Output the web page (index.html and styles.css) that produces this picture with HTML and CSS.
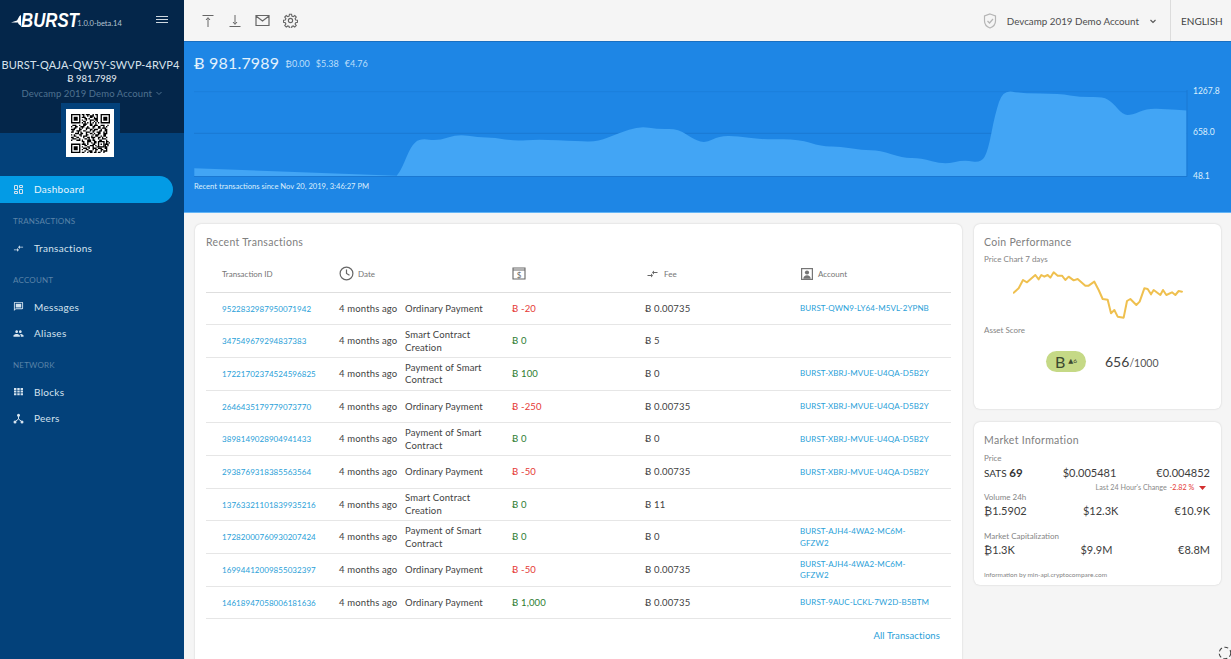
FILE: index.html
```html
<!DOCTYPE html>
<html>
<head>
    <title>Burst Wallet</title>
    <link rel="stylesheet" href="styles.css">
</head>
<body>
    <aside class="sidebar">
        <div class="side-head">
            <div class="logo-row">
                <svg class="wing" width="10" height="14" viewBox="0 0 10 14"><path d="M0 8.5 6 6.5 8.5 2 10 1V12L7.5 10 7 8.5Z" fill="#fff"/></svg>
                <span class="logo">BURST</span>
                <span class="version">1.0.0-beta.14</span>
                <div class="burger"><i></i><i></i><i></i></div>
            </div>
            <div class="address">BURST-QAJA-QW5Y-SWVP-4RVP4</div>
            <div class="side-balance">Ƀ 981.7989</div>
            <div class="side-account">Devcamp 2019 Demo Account
                <svg width="8" height="8" viewBox="0 0 8 8"><path d="M1.5 3 4 5.5 6.5 3" fill="none" stroke="#4f7290"/></svg>
            </div>
            <div class="qr-box">
                <div class="qr-white">
                    <svg width="39" height="39" viewBox="0 0 29 29">
                        <path fill-rule="evenodd" d="M0 0h7v7H0zM1 1v5h5V1zM2 2h3v3H2zM22 0h7v7h-7zM23 1v5h5V1zM24 2h3v3h-3zM0 22h7v7H0zM1 23v5h5v-5zM2 24h3v3H2zM20 20h5v5h-5zM21 21v3h3v-3zM22 22h1v1h-1z"/>
                        <path fill="none" stroke="#000" d="M8 .5h2m1 0h3m2 0h1m1 0h2M9 1.5h1m2 0h1m1 0h3m2 0h1M8 2.5h3m3 0h2m1 0h1m1 0h1M10 3.5h2m1 0h1m3 0h3M8 4.5h1m2 0h1m2 0h3m1 0h2M9 5.5h2m3 0h1m2 0h1m1 0h1M8 6.5h1m1 0h1m1 0h1m1 0h1m1 0h1m1 0h1m1 0h1M9 7.5h3m2 0h2m2 0h1M1 8.5h3m2 0h1m2 0h2m3 0h2m1 0h3m2 0h3m2 0h1M0 9.5h1m2 0h2m2 0h3m2 0h1m3 0h2m2 0h2m2 0h1m1 0h1M2 10.5h2m2 0h1m1 0h1m2 0h3m2 0h1m3 0h2m1 0h3M0 11.5h3m3 0h2m3 0h1m2 0h2m1 0h3m2 0h1m2 0h2M1 12.5h1m2 0h3m2 0h2m3 0h1m1 0h2m3 0h2m2 0h2M0 13.5h2m3 0h1m1 0h1m3 0h3m2 0h1m2 0h3m2 0h1m1 0h1M3 14.5h3m1 0h2m2 0h1m2 0h2m1 0h1m2 0h2m2 0h3M0 15.5h1m1 0h1m3 0h2m3 0h2m3 0h1m1 0h3m3 0h2M2 16.5h2m3 0h1m1 0h3m3 0h1m2 0h2m2 0h1m1 0h2M0 17.5h2m2 0h2m3 0h1m2 0h2m1 0h3m2 0h2m1 0h1m2 0h1M1 18.5h3m2 0h1m3 0h2m1 0h1m2 0h1m3 0h1m2 0h3M0 19.5h1m3 0h3m1 0h1m3 0h3m1 0h2m3 0h2m3 0h1M8 20.5h2m2 0h3m2 0h2m7 0h2M9 21.5h1m2 0h1m2 0h1m1 0h2m7 0h1m1 0h1M8 22.5h3m1 0h1m3 0h2m7 0h3M10 23.5h2m2 0h3m1 0h1m6 0h1m1 0h1M8 24.5h1m3 0h2m2 0h1m2 0h1m5 0h2M9 25.5h3m1 0h1m2 0h3m1 0h3m2 0h2M8 26.5h1m2 0h2m3 0h1m1 0h2m2 0h2m2 0h1M10 27.5h1m2 0h3m2 0h1m3 0h1m1 0h3M8 28.5h2m2 0h1m1 0h2m1 0h2m1 0h2m2 0h1"/>
                    </svg>
                </div>
            </div>
        </div>
        <nav class="nav">
            <a class="nav-item active">
                <svg width="11" height="11" viewBox="0 0 11 11" fill="none" stroke="currentColor"><path d="M1.5 1.5h3v4h-3zM6.5 1.5h3v2h-3zM1.5 7.5h3v2h-3zM6.5 5.5h3v4h-3z"/></svg>
                Dashboard</a>
            <div class="nav-label">TRANSACTIONS</div>
            <a class="nav-item">
                <svg width="11" height="11" viewBox="0 0 24 24" fill="currentColor"><path d="M9.01 14H2v2h7.01v3L13 15l-3.99-4v3zm5.98-1v-3H22V8h-7.01V5L11 9l3.99 4z"/></svg>
                Transactions</a>
            <div class="nav-label">ACCOUNT</div>
            <a class="nav-item">
                <svg width="11" height="11" viewBox="0 0 24 24" fill="currentColor"><path d="M20 2H4c-1.1 0-2 .9-2 2v18l4-4h14c1.1 0 2-.9 2-2V4c0-1.1-.9-2-2-2zm0 14H6l-2 2V4h16v12zM6 6h12v8H6z"/></svg>
                Messages</a>
            <a class="nav-item">
                <svg width="11" height="11" viewBox="0 0 24 24" fill="currentColor"><path d="M16 11c1.66 0 2.99-1.34 2.99-3S17.66 5 16 5c-1.66 0-3 1.34-3 3s1.34 3 3 3zm-8 0c1.66 0 2.99-1.34 2.99-3S9.66 5 8 5C6.34 5 5 6.34 5 8s1.34 3 3 3zm0 2c-2.33 0-7 1.17-7 3.5V19h14v-2.5c0-2.33-4.67-3.5-7-3.5zm8 0c-.29 0-.62.02-.97.05 1.16.84 1.97 1.97 1.97 3.45V19h6v-2.5c0-2.33-4.67-3.5-7-3.5z"/></svg>
                Aliases</a>
            <div class="nav-label">NETWORK</div>
            <a class="nav-item">
                <svg width="11" height="11" viewBox="0 0 11 11" fill="currentColor"><path d="M1 2h2.4v2H1zM4.3 2h2.4v2H4.3zM7.6 2H10v2H7.6zM1 4.6h2.4v2H1zM4.3 4.6h2.4v2H4.3zM7.6 4.6H10v2H7.6zM1 7.2h2.4v2H1zM4.3 7.2h2.4v2H4.3zM7.6 7.2H10v2H7.6z"/></svg>
                Blocks</a>
            <a class="nav-item">
                <svg width="11" height="11" viewBox="0 0 11 11" fill="currentColor"><path d="M5.5 3v3L2.2 8.6M5.5 6l3.3 2.6" stroke="currentColor" fill="none"/><circle cx="5.5" cy="2.2" r="1.5"/><circle cx="2" cy="9" r="1.5"/><circle cx="9" cy="9" r="1.5"/></svg>
                Peers</a>
        </nav>
    </aside>

    <div class="main">
        <header class="toolbar">
            <div class="tool-icons">
                <svg width="14" height="14" viewBox="0 0 14 14" fill="none" stroke="#666"><path d="M1.5 1.5h11M7 13V4M5 6l2-2.4L9 6"/></svg>
                <svg width="14" height="14" viewBox="0 0 14 14" fill="none" stroke="#666"><path d="M1.5 12.5h11M7 1v9M5 8l2 2.4L9 8"/></svg>
                <svg width="15" height="13" viewBox="0 0 15 13" fill="none" stroke="#666" stroke-width="1.2"><path d="M1 1.5h13v10H1zM1 2l6.5 5L14 2"/></svg>
                <svg width="15" height="15" viewBox="0 0 24 24" fill="none" stroke="#666" stroke-width="1.8"><circle cx="12" cy="12" r="3.4"/><path d="M10.3 2h3.4l.5 3 2.1.9 2.5-1.8 2.4 2.4-1.8 2.5.9 2.1 3 .5v3.4l-3 .5-.9 2.1 1.8 2.5-2.4 2.4-2.5-1.8-2.1.9-.5 3h-3.4l-.5-3-2.1-.9-2.5 1.8-2.4-2.4 1.8-2.5-.9-2.1-3-.5v-3.4l3-.5.9-2.1-1.8-2.5 2.4-2.4 2.5 1.8 2.1-.9z"/></svg>
            </div>
            <div class="tool-account">
                <svg width="14" height="16" viewBox="0 0 14 16" fill="none" stroke="#b5b5b5" stroke-width="1.2"><path d="M7 1l5.5 2v5c0 3.4-2.3 5.8-5.5 7-3.2-1.2-5.5-3.6-5.5-7V3z"/><path d="M4.5 8l2 2 3.5-4"/></svg>
                <span>Devcamp 2019 Demo Account</span>
                <svg width="8" height="8" viewBox="0 0 8 8"><path d="M1.5 3 4 5.5 6.5 3" fill="none" stroke="#555" stroke-width="1.1"/></svg>
            </div>
            <div class="lang">ENGLISH</div>
        </header>

        <section class="hero">
            <div class="hero-balance">
                <span class="big">Ƀ 981.7989</span>
                <span class="small">₿0.00</span>
                <span class="small">$5.38</span>
                <span class="small">€4.76</span>
            </div>
            <svg class="hero-chart" width="1037" height="97" viewBox="194 84 1037 97">
                <path d="M194 91.7H1187" stroke="#1c7fdc"/>
                <path d="M194 133.3H1187" stroke="#1a78d2"/>
                <path fill="#42a5f5" d="M194.3 168.3L396.7 175.7L399.4 171.9Q402 168 406.5 157Q411 146 415.5 142.2Q420 138.3 429 139.7Q438 141 448 137.5Q458 134 468 135.7Q478 137.3 486.5 137.5Q495 137.7 505 139.4Q515 141 526.5 140.2Q538 139.3 558 140.3Q578 141.3 588 141.5Q598 141.7 608 137.5Q618 133.3 629 129.7Q640 126 649 127.7Q658 129.3 668 129Q678 128.7 686.5 134.4Q695 140 700.5 141.5Q706 143 712.5 139.5Q719 136 728 136Q737 135.9 749 137.8Q761 139.6 779.5 139.3Q798 138.9 810 142.8Q822 146.7 830.5 146.6Q839 146.4 850.5 148.3Q862 150.1 871 150.3Q880 150.4 891.5 154.3Q903 158.2 911.5 158Q920 157.9 932 161.3Q944 164.7 954 162.3Q964 159.9 972.5 161.5Q981 163 984.5 157Q988 151 991.5 132.5Q995 114 999 102Q1003 90 1012.5 91.8Q1022 93.5 1040.5 93.5Q1059 93.5 1070 95.4Q1081 97.3 1092 97.1Q1103 96.9 1107.5 99.5Q1112 102 1117.5 108.5Q1123 115 1127.5 115Q1132 115 1139.5 111.7Q1147 108.4 1156.5 108.7Q1166 109 1176 109.8L1186.6 110.5V176.5H194.3Z"/>
                <path d="M194 176.5H1187M1187 90V176.5" stroke="#1a78d2"/>
                <text x="1193" y="94">1267.8</text>
                <text x="1193" y="135">658.0</text>
                <text x="1193" y="178.5">48.1</text>
            </svg>
            <div class="hero-note">Recent transactions since Nov 20, 2019, 3:46:27 PM</div>
        </section>

        <div class="content">
            <section class="card tx-card">
                <h3 class="card-title">Recent Transactions</h3>
                <table class="tx-table">
                    <colgroup>
                        <col class="c-id"><col class="c-date"><col class="c-type"><col class="c-amount"><col class="c-fee"><col class="c-acc">
                    </colgroup>
                    <thead>
                        <tr>
                            <th class="id">Transaction ID</th>
                            <th colspan="2"><span class="th-in">
                                <svg width="15" height="15" viewBox="0 0 15 15" fill="none" stroke="#666" stroke-width="1.2"><circle cx="7.5" cy="7.5" r="6.4"/><path d="M7.5 3.5v4l3 1.7"/></svg>
                                Date</span></th>
                            <th><span class="th-in">
                                <svg width="14" height="13" viewBox="0 0 14 13" fill="none" stroke="#666" stroke-width="1.1"><path d="M1 1h12v11H1zM1 3h12"/><text x="7" y="10.5" class="dollar">$</text></svg>
                                </span></th>
                            <th><span class="th-in">
                                <svg width="15" height="12" viewBox="0 0 24 24" fill="#666"><path d="M9.01 14H2v2h7.01v3L13 15l-3.99-4v3zm5.98-1v-3H22V8h-7.01V5L11 9l3.99 4z"/></svg>
                                Fee</span></th>
                            <th><span class="th-in">
                                <svg width="14" height="14" viewBox="0 0 14 14"><path fill="#757575" d="M1 1h12v12H1z"/><path fill="#fff" d="M2.2 2.2h9.6v9.6H2.2z"/><circle cx="7" cy="5.5" r="2.1" fill="#757575"/><path fill="#757575" d="M3.3 11.8c0-2.3 1.7-3.5 3.7-3.5s3.7 1.2 3.7 3.5z"/></svg>
                                Account</span></th>
                        </tr>
                    </thead>
                    <tbody>
                        <tr><td class="id"><a>9522832987950071942</a></td><td>4 months ago</td><td>Ordinary Payment</td><td class="neg">Ƀ -20</td><td>Ƀ 0.00735</td><td class="acc"><a>BURST-QWN9-LY64-M5VL-2YPNB</a></td></tr>
                        <tr><td class="id"><a>347549679294837383</a></td><td>4 months ago</td><td>Smart Contract<br>Creation</td><td class="pos">Ƀ 0</td><td>Ƀ 5</td><td class="acc"></td></tr>
                        <tr><td class="id"><a>17221702374524596825</a></td><td>4 months ago</td><td>Payment of Smart<br>Contract</td><td class="pos">Ƀ 100</td><td>Ƀ 0</td><td class="acc"><a>BURST-XBRJ-MVUE-U4QA-D5B2Y</a></td></tr>
                        <tr><td class="id"><a>2646435179779073770</a></td><td>4 months ago</td><td>Ordinary Payment</td><td class="neg">Ƀ -250</td><td>Ƀ 0.00735</td><td class="acc"><a>BURST-XBRJ-MVUE-U4QA-D5B2Y</a></td></tr>
                        <tr><td class="id"><a>3898149028904941433</a></td><td>4 months ago</td><td>Payment of Smart<br>Contract</td><td class="pos">Ƀ 0</td><td>Ƀ 0</td><td class="acc"><a>BURST-XBRJ-MVUE-U4QA-D5B2Y</a></td></tr>
                        <tr><td class="id"><a>2938769318385563564</a></td><td>4 months ago</td><td>Ordinary Payment</td><td class="neg">Ƀ -50</td><td>Ƀ 0.00735</td><td class="acc"><a>BURST-XBRJ-MVUE-U4QA-D5B2Y</a></td></tr>
                        <tr><td class="id"><a>13763321101839935216</a></td><td>4 months ago</td><td>Smart Contract<br>Creation</td><td class="pos">Ƀ 0</td><td>Ƀ 11</td><td class="acc"></td></tr>
                        <tr><td class="id"><a>17282000760930207424</a></td><td>4 months ago</td><td>Payment of Smart<br>Contract</td><td class="pos">Ƀ 0</td><td>Ƀ 0</td><td class="acc"><a>BURST-AJH4-4WA2-MC6M-<br>GFZW2</a></td></tr>
                        <tr><td class="id"><a>16994412009855032397</a></td><td>4 months ago</td><td>Ordinary Payment</td><td class="neg">Ƀ -50</td><td>Ƀ 0.00735</td><td class="acc"><a>BURST-AJH4-4WA2-MC6M-<br>GFZW2</a></td></tr>
                        <tr><td class="id"><a>14618947058006181636</a></td><td>4 months ago</td><td>Ordinary Payment</td><td class="pos">Ƀ 1,000</td><td>Ƀ 0.00735</td><td class="acc"><a>BURST-9AUC-LCKL-7W2D-B5BTM</a></td></tr>
                    </tbody>
                </table>
                <div class="all-link"><a>All Transactions</a></div>
            </section>

            <div class="side-cards">
                <section class="card perf-card">
                    <h3 class="card-title">Coin Performance</h3>
                    <div class="label">Price Chart 7 days</div>
                    <svg class="spark" width="170" height="53" viewBox="128 135 510 159">
                        <polyline fill="none" stroke="#efc04f" stroke-width="6" stroke-linejoin="round" stroke-linecap="round" points="130,203 145,190 158,165 170,172 195,150 205,163 213,150 222,155 232,150 240,158 250,142 262,152 275,152 285,165 295,155 310,166 322,162 345,182 355,182 372,170 385,195 397,222 412,224 422,265 432,255 442,275 460,278 470,228 480,222 498,240 508,230 522,190 532,192 542,208 550,195 570,210 578,195 588,210 605,202 615,210 625,198 635,200"/>
                    </svg>
                    <div class="label score-label">Asset Score</div>
                    <div class="score">
                        <span class="pill"><b>B</b><small>▲6</small></span>
                        <span class="score-num">656<small>/1000</small></span>
                    </div>
                </section>

                <section class="card market-card">
                    <h3 class="card-title">Market Information</h3>
                    <div class="label">Price</div>
                    <div class="vals price-vals">
                        <span><span class="sats">SATS <b>69</b></span></span>
                        <span>$0.005481</span>
                        <span>€0.004852</span>
                    </div>
                    <div class="change">Last 24 Hour's Change <span class="down">-2.82 %</span>
                        <svg width="7" height="4" viewBox="0 0 7 4"><path d="M0 0h7L3.5 4z" fill="#d32f2f"/></svg>
                    </div>
                    <div class="label">Volume 24h</div>
                    <div class="vals">
                        <span>₿1.5902</span>
                        <span>$12.3K</span>
                        <span>€10.9K</span>
                    </div>
                    <div class="label cap-label">Market Capitalization</div>
                    <div class="vals">
                        <span>₿1.3K</span>
                        <span>$9.9M</span>
                        <span>€8.8M</span>
                    </div>
                    <div class="source">Information by min-api.cryptocompare.com</div>
                </section>
            </div>
        </div>
    </div>

    <svg class="spinner" width="14" height="14" viewBox="0 0 14 14"><circle cx="7" cy="7" r="5.8" fill="none" stroke="#444" stroke-width="1.1" stroke-dasharray="4 2.5"/></svg>
</body>
</html>
```
FILE: styles.css
```css
* { box-sizing: border-box; }
html, body { height: 100%; }
body { margin: 0; display: flex; overflow: hidden; background: #f5f5f5; font-family: "Lato", "DejaVu Sans", sans-serif; color: #424242; }
a { color: #29a0d8; text-decoration: none; }

.sidebar { width: 184px; flex: none; background: #03417a; color: #d5e3ef; }
.side-head { height: 133px; background: #04264a; text-align: center; }
.logo-row { height: 42px; display: flex; align-items: center; padding: 0 16px 3px 11px; text-align: left; }
.wing { flex: none; margin-top: 2px; }
.logo { font-family: "Liberation Sans", sans-serif; font-size: 21px; font-weight: 700; font-style: italic; color: #fff; line-height: 1; transform: scaleX(.8); transform-origin: left; margin-right: -18px; }
.version { font-size: 7.5px; color: #b6c4d2; margin: 8px 0 0 2px; white-space: nowrap; }
.burger { margin-left: auto; width: 12px; display: flex; flex-direction: column; gap: 2px; }
.burger i { display: block; height: 1px; background: #cfd8e0; }
.address { margin-top: 16px; padding-right: 3px; font-size: 11px; line-height: 14px; letter-spacing: .1px; white-space: nowrap; color: #d7e2ec; }
.side-balance { font-size: 9.5px; line-height: 13px; color: #e3ebf2; }
.side-account { margin-top: 2px; font-size: 9.5px; line-height: 14px; color: #4f7290; letter-spacing: .1px; }
.qr-box { width: 59px; height: 59px; margin: 2px 0 0 61px; padding: 6px 5px; background: #03417a; }
.qr-white { width: 48px; height: 48px; background: #fff; display: flex; align-items: center; justify-content: center; }

.nav { margin-top: 43px; }
.nav-item { display: flex; align-items: center; gap: 10px; height: 26.5px; padding-left: 13px; font-size: 10px; letter-spacing: .3px; color: #d5e3ef; }
.nav-item svg { flex: none; color: #d5e3ef; }
.nav-item.active { width: 173px; height: 27px; padding-bottom: 1px; background: #039be5; color: #e8f5fd; border-radius: 0 14px 14px 0; }
.nav-label { height: 32px; padding: 12px 0 0 13px; font-size: 8px; line-height: 12px; letter-spacing: .2px; color: #5a83a8; }

.main { flex: 1; min-width: 0; display: flex; flex-direction: column; }
.toolbar { height: 42px; flex: none; display: flex; align-items: center; background: #f5f5f5; border-bottom: 1px solid #1a6fc0; }
.tool-icons { display: flex; align-items: center; gap: 13px; padding-left: 17px; }
.tool-account { margin-left: auto; display: flex; align-items: center; gap: 10px; padding-right: 13px; font-size: 9.8px; color: #4d4d4d; }
.lang { height: 41px; width: 61px; border-left: 1px solid #dcdcdc; display: flex; align-items: center; padding-left: 10px; font-size: 10px; color: #444; }

.hero { height: 171px; flex: none; padding: 9px 0 0 10px; background: #1e86e5; border-bottom: 1px solid #64b5f6; color: #e3f2fd; }
.hero-balance { height: 22px; margin-bottom: 11px; display: flex; align-items: center; gap: 6px; }
.big { font-size: 16px; letter-spacing: .2px; }
.small { font-size: 9px; margin-top: 3px; color: #bbdefb; }
.hero-chart { display: block; }
.hero-chart text { font-size: 8.5px; fill: #dceefc; }
.hero-note { font-size: 7.6px; line-height: 10px; color: #dceefc; }

.content { flex: 1; min-height: 0; display: flex; align-items: flex-start; gap: 12px; padding: 11px 10px 0 11px; }
.card { background: #fff; border-radius: 6px; box-shadow: 0 0 2px rgba(0,0,0,.18); padding: 11px 11px 0 10px; }
.card-title { margin: 0; font-size: 10.5px; line-height: 14px; font-weight: 400; color: #808080; letter-spacing: .3px; }
.tx-card { width: 767px; flex: none; height: 450px; padding-left: 11px; }
.tx-table { width: 745px; margin-top: 7px; border-collapse: collapse; table-layout: fixed; font-size: 9.5px; line-height: 12.5px; }
.c-id { width: 133px; }
.c-date { width: 66px; }
.c-type { width: 107px; }
.c-amount { width: 133px; }
.c-fee { width: 155px; }
.c-acc { width: 151px; }
.tx-table th { height: 36px; padding: 0; font-size: 8px; font-weight: 400; text-align: left; color: #757575; border-bottom: 1px solid #dedede; }
.tx-table td { height: 32.7px; padding: 1px 0 0; border-bottom: 1px solid #e6e6e6; letter-spacing: .15px; }
.tx-table .id { padding-left: 16px; }
.tx-table td.id { font-size: 8px; letter-spacing: .05px; }
.tx-table td.acc { font-size: 8px; line-height: 11.5px; letter-spacing: .1px; }
.th-in { display: flex; align-items: center; gap: 4px; }
.dollar { font-size: 8px; text-anchor: middle; fill: #666; stroke: none; }
.neg { color: #e53935; }
.pos { color: #2e7d32; }
.all-link { padding: 11px 11px 0 0; text-align: right; font-size: 9.5px; letter-spacing: .1px; }

.side-cards { width: 247px; flex: none; display: flex; flex-direction: column; gap: 13px; }
.perf-card { height: 185px; }
.market-card { height: 163px; }
.label { font-size: 8px; line-height: 10px; color: #858585; }
.perf-card .label { margin-top: 5px; }
.spark { display: block; margin: 6px 0 0 29px; }
.perf-card .score-label { margin-top: 2px; }
.score { display: flex; align-items: center; justify-content: flex-start; gap: 19px; margin: 16px 0 0 62px; }
.pill { width: 40px; height: 21px; border-radius: 11px; background: #c5d986; display: flex; align-items: center; justify-content: center; gap: 3px; color: #3d4a30; }
.pill b { font-size: 16px; font-weight: 400; }
.pill small { font-size: 6.5px; margin-top: -1px; }
.score-num { font-size: 14px; color: #424242; }
.score-num small { font-size: 10.5px; color: #555; }

.market-card .card-title { margin-bottom: 6px; }
.vals { display: flex; justify-content: space-between; font-size: 11px; line-height: 15px; color: #3d3d3d; margin-top: 1px; }
.price-vals { margin-top: 2px; }
.sats { font-size: 10px; color: #333; }
.sats b { font-size: 11.5px; }
.change { text-align: right; font-size: 7.2px; line-height: 9px; margin-top: 2px; padding-right: 4px; color: #8a8a8a; }
.down { color: #e53935; margin: 0 3px 0 1px; }
.cap-label { margin-top: 13px; }
.source { margin-top: 13px; font-size: 6.5px; line-height: 9px; color: #858585; }

.spinner { position: fixed; left: 1218px; top: 646px; }
```
